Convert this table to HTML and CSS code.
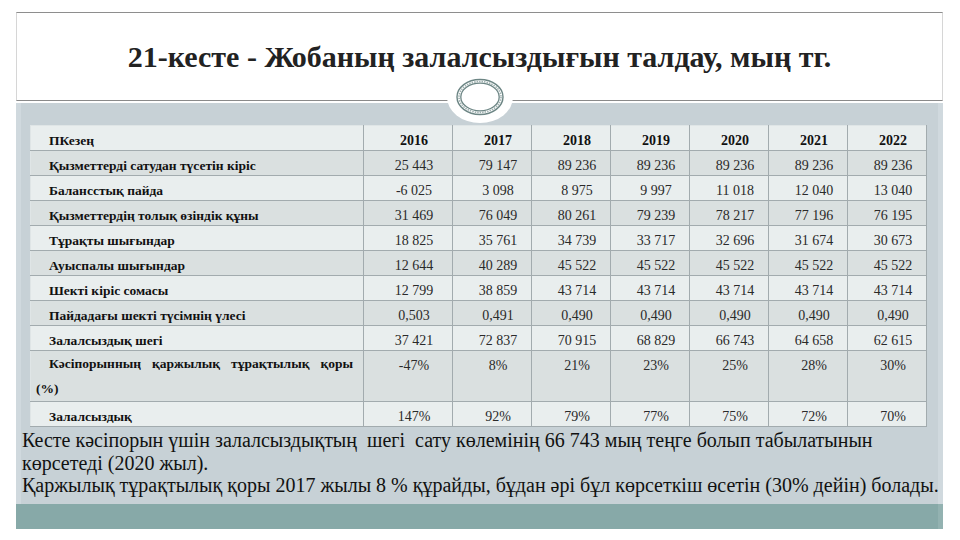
FILE: index.html
```html
<!DOCTYPE html>
<html>
<head>
<meta charset="utf-8">
<title>21-кесте</title>
<link rel="stylesheet" href="styles.css">
</head>
<body>
<div class="slide">
  <header class="title-area">
    <h1 class="title">21-кесте - Жобаның залалсыздығын талдау, мың тг.</h1>
  </header>
  <div class="ornament">
    <svg width="70" height="56" viewBox="0 0 70 56">
      <ellipse cx="35" cy="28" rx="33" ry="26" fill="#ffffff"/>
      <ellipse cx="35" cy="28" rx="23" ry="17.5" fill="none" stroke="#6c8584" stroke-width="1.4"/>
      <ellipse cx="35" cy="28" rx="21" ry="15.5" fill="none" stroke="#9fb1b0" stroke-width="1.6" stroke-dasharray="1.5 1"/>
      <ellipse cx="35" cy="28" rx="19.2" ry="13.8" fill="none" stroke="#6c8584" stroke-width="1.3"/>
    </svg>
  </div>
  <main class="band">
    <table class="data">
      <colgroup>
        <col class="c-label"><col class="c-2016"><col class="c-year"><col class="c-year"><col class="c-year"><col class="c-year"><col class="c-year"><col class="c-year">
      </colgroup>
      <tr class="head">
        <td class="label">ПКезең</td><td>2016</td><td>2017</td><td>2018</td><td>2019</td><td>2020</td><td>2021</td><td>2022</td>
      </tr>
      <tr>
        <td class="label">Қызметтерді сатудан түсетін кіріс</td><td>25 443</td><td>79 147</td><td>89 236</td><td>89 236</td><td>89 236</td><td>89 236</td><td>89 236</td>
      </tr>
      <tr>
        <td class="label">Балансстық пайда</td><td>-6 025</td><td>3 098</td><td>8 975</td><td>9 997</td><td>11 018</td><td>12 040</td><td>13 040</td>
      </tr>
      <tr>
        <td class="label">Қызметтердің толық өзіндік құны</td><td>31 469</td><td>76 049</td><td>80 261</td><td>79 239</td><td>78 217</td><td>77 196</td><td>76 195</td>
      </tr>
      <tr>
        <td class="label">Тұрақты шығындар</td><td>18 825</td><td>35 761</td><td>34 739</td><td>33 717</td><td>32 696</td><td>31 674</td><td>30 673</td>
      </tr>
      <tr>
        <td class="label">Ауыспалы шығындар</td><td>12 644</td><td>40 289</td><td>45 522</td><td>45 522</td><td>45 522</td><td>45 522</td><td>45 522</td>
      </tr>
      <tr>
        <td class="label">Шекті кіріс сомасы</td><td>12 799</td><td>38 859</td><td>43 714</td><td>43 714</td><td>43 714</td><td>43 714</td><td>43 714</td>
      </tr>
      <tr>
        <td class="label">Пайдадағы шекті түсімнің үлесі</td><td>0,503</td><td>0,491</td><td>0,490</td><td>0,490</td><td>0,490</td><td>0,490</td><td>0,490</td>
      </tr>
      <tr>
        <td class="label">Залалсыздық шегі</td><td>37 421</td><td>72 837</td><td>70 915</td><td>68 829</td><td>66 743</td><td>64 658</td><td>62 615</td>
      </tr>
      <tr>
        <td class="label wrap">Кәсіпорынның қаржылық тұрақтылық қоры<br>(%)</td><td>-47%</td><td>8%</td><td>21%</td><td>23%</td><td>25%</td><td>28%</td><td>30%</td>
      </tr>
      <tr>
        <td class="label">Залалсыздық</td><td>147%</td><td>92%</td><td>79%</td><td>77%</td><td>75%</td><td>72%</td><td>70%</td>
      </tr>
    </table>
    <p class="note">Кесте кәсіпорын үшін залалсыздықтың&nbsp; шегі&nbsp; сату көлемінің 66 743 мың теңге болып табылатынын<br>көрсетеді (2020 жыл).<br>Қаржылық тұрақтылық қоры 2017 жылы 8 % құрайды, бұдан әрі бұл көрсеткіш өсетін (30% дейін) болады.</p>
  </main>
  <footer class="teal"></footer>
</div>
</body>
</html>
```

FILE: styles.css
```css
html, body {
  margin: 0;
  padding: 0;
  background: #ffffff;
}

body {
  width: 960px;
  height: 540px;
  overflow: hidden;
  font-family: "Liberation Serif", "Times New Roman", serif;
  color: #1a1a1a;
}

.slide {
  position: relative;
  width: 927px;
  margin: 12px 0 0 16px;
}

.title-area {
  box-sizing: border-box;
  height: 89px;
  border-top: 1px solid #8e8e8e;
  border-bottom: 1px solid #8a8a8a;
  border-left: 1px solid #d6d6d6;
  border-right: 1px solid #d6d6d6;
  display: flex;
  justify-content: center;
  padding-top: 27px;
}

.title {
  margin: 0;
  font-family: "Liberation Serif", serif;
  font-size: 30px;
  font-weight: bold;
  line-height: 34px;
  color: #222222;
}

.ornament {
  position: absolute;
  left: 429px;
  top: 57px;
  width: 70px;
  height: 56px;
}

.ornament svg {
  display: block;
}

.band {
  box-sizing: border-box;
  height: 401px;
  margin-top: 2px;
  background: #c7d1d6;
  border-left: 5px solid #d0d9de;
  border-right: 5px solid #d0d9de;
  padding: 22px 13px 0 9px;
}

.data {
  width: 895px;
  border-collapse: collapse;
  table-layout: fixed;
  background: #e9eeee;
  border: 1px solid #dfe5e6;
  font-family: "Liberation Serif", serif;
}

.c-label { width: 333px; }
.c-2016 { width: 89px; }
.c-year { width: 79px; }

.data td {
  border: 1px solid #a2abae;
  border-top-color: #8e989b;
  padding: 5px 0 0 12px;
  line-height: 19px;
  font-size: 14px;
  text-align: center;
  vertical-align: top;
  color: #2a2a2a;
  white-space: nowrap;
}

.data tr:nth-child(even) td {
  background: #dae0e0;
}

.data tr:nth-child(odd) td {
  background: #e9eeee;
}

.data tr.head td {
  font-weight: bold;
  color: #111111;
  border-top-color: #dfe5e6;
}

.data td.label {
  text-align: left;
  padding-left: 5px;
  text-indent: 13px;
  font-weight: bold;
  font-size: 13.5px;
  color: #111111;
  border-left-color: #dfe5e6;
}

.data td.wrap {
  white-space: normal;
  padding-top: 0;
  padding-right: 10px;
  line-height: 25px;
  text-align: justify;
  text-align-last: justify;
}

.note {
  margin: 2px 0 0 -8px;
  font-family: "Liberation Serif", serif;
  font-size: 20px;
  line-height: 22.5px;
  color: #111111;
  white-space: nowrap;
}

.teal {
  height: 25px;
  background: #87a9a8;
  border-right: 5px solid #93b2b1;
}
```
